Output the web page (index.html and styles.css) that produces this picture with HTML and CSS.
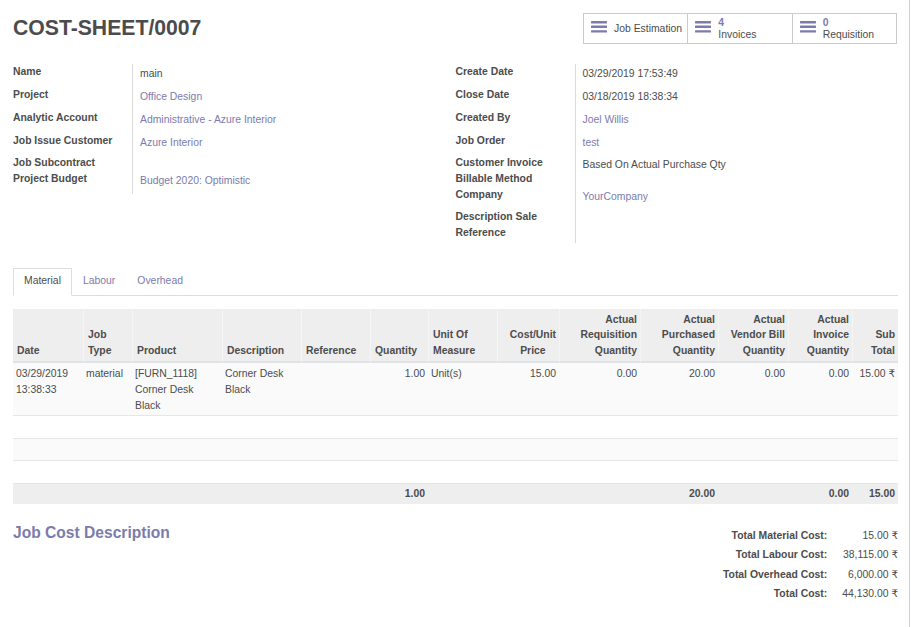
FILE: index.html
```html
<!DOCTYPE html>
<html lang="en">
<head>
<meta charset="utf-8">
<title>COST-SHEET/0007</title>
<link rel="stylesheet" href="styles.css">
</head>
<body>
<div class="page">
  <div class="header">
    <h1 class="title">COST-SHEET/0007</h1>
    <div class="statbox">
      <a class="stat">
        <svg class="bars" width="16" height="12" viewBox="0 0 16 12"><rect x="0" y="0" width="16" height="2.4" rx="0.6"/><rect x="0" y="4.6" width="16" height="2.4" rx="0.6"/><rect x="0" y="9.2" width="16" height="2.4" rx="0.6"/></svg>
        <span class="stat-text single">Job Estimation</span>
      </a>
      <a class="stat">
        <svg class="bars" width="16" height="12" viewBox="0 0 16 12"><rect x="0" y="0" width="16" height="2.4" rx="0.6"/><rect x="0" y="4.6" width="16" height="2.4" rx="0.6"/><rect x="0" y="9.2" width="16" height="2.4" rx="0.6"/></svg>
        <span class="stat-text"><span class="stat-value">4</span><span class="stat-label">Invoices</span></span>
      </a>
      <a class="stat">
        <svg class="bars" width="16" height="12" viewBox="0 0 16 12"><rect x="0" y="0" width="16" height="2.4" rx="0.6"/><rect x="0" y="4.6" width="16" height="2.4" rx="0.6"/><rect x="0" y="9.2" width="16" height="2.4" rx="0.6"/></svg>
        <span class="stat-text"><span class="stat-value">0</span><span class="stat-label">Requisition</span></span>
      </a>
    </div>
  </div>

  <div class="groups">
    <div class="group">
      <div class="lbl">Name</div><div class="val">main</div>
      <div class="lbl">Project</div><div class="val link">Office Design</div>
      <div class="lbl">Analytic Account</div><div class="val link">Administrative - Azure Interior</div>
      <div class="lbl r22">Job Issue Customer</div><div class="val link">Azure Interior</div>
      <div class="lbl r16">Job Subcontract</div><div class="val"></div>
      <div class="lbl">Project Budget</div><div class="val link">Budget 2020: Optimistic</div>
    </div>
    <div class="group">
      <div class="lbl">Create Date</div><div class="val">03/29/2019 17:53:49</div>
      <div class="lbl">Close Date</div><div class="val">03/18/2019 18:38:34</div>
      <div class="lbl">Created By</div><div class="val link">Joel Willis</div>
      <div class="lbl r22">Job Order</div><div class="val link">test</div>
      <div class="lbl">Customer Invoice Billable Method</div><div class="val">Based On Actual Purchase Qty</div>
      <div class="lbl r22">Company</div><div class="val link">YourCompany</div>
      <div class="lbl last">Description Sale Reference</div><div class="val"></div>
    </div>
  </div>

  <ul class="tabs">
    <li class="tab active">Material</li>
    <li class="tab">Labour</li>
    <li class="tab">Overhead</li>
  </ul>

  <table class="list">
    <thead>
      <tr>
        <th class="w-date">Date</th>
        <th class="w-type">Job<br>Type</th>
        <th class="w-prod">Product</th>
        <th class="w-desc">Description</th>
        <th class="w-ref">Reference</th>
        <th class="w-qty">Quantity</th>
        <th class="w-uom">Unit Of<br>Measure</th>
        <th class="w-cost num"><span class="stack">Cost/Unit<br>Price</span></th>
        <th class="w-req num">Actual<br>Requisition<br>Quantity</th>
        <th class="w-pur num">Actual<br>Purchased<br>Quantity</th>
        <th class="w-vb num">Actual<br>Vendor Bill<br>Quantity</th>
        <th class="w-inv num">Actual<br>Invoice<br>Quantity</th>
        <th class="w-sub num">Sub<br>Total</th>
      </tr>
    </thead>
    <tbody>
      <tr class="data">
        <td>03/29/2019 13:38:33</td>
        <td>material</td>
        <td>[FURN_1118] Corner Desk Black</td>
        <td>Corner Desk Black</td>
        <td></td>
        <td class="num">1.00</td>
        <td>Unit(s)</td>
        <td class="num">15.00</td>
        <td class="num">0.00</td>
        <td class="num">20.00</td>
        <td class="num">0.00</td>
        <td class="num">0.00</td>
        <td class="num nowrap">15.00 ₹</td>
      </tr>
      <tr class="empty"><td colspan="13">&nbsp;</td></tr>
      <tr class="empty"><td colspan="13">&nbsp;</td></tr>
      <tr class="empty"><td colspan="13">&nbsp;</td></tr>
    </tbody>
    <tfoot>
      <tr>
        <td></td><td></td><td></td><td></td><td></td>
        <td class="num">1.00</td>
        <td></td><td></td><td></td>
        <td class="num">20.00</td>
        <td></td>
        <td class="num">0.00</td>
        <td class="num">15.00</td>
      </tr>
    </tfoot>
  </table>

  <div class="bottom">
    <h3 class="section-title">Job Cost Description</h3>
    <div class="totals">
      <div class="t-lbl">Total Material Cost:</div><div class="t-val">15.00 ₹</div>
      <div class="t-lbl">Total Labour Cost:</div><div class="t-val">38,115.00 ₹</div>
      <div class="t-lbl">Total Overhead Cost:</div><div class="t-val">6,000.00 ₹</div>
      <div class="t-lbl">Total Cost:</div><div class="t-val">44,130.00 ₹</div>
    </div>
  </div>
</div>
</body>
</html>
```
FILE: styles.css
```css
* { box-sizing: border-box; }

html, body {
  margin: 0;
  padding: 0;
  background: #ffffff;
  overflow: hidden;
}

body {
  font-family: "Liberation Sans", Arial, "DejaVu Sans", sans-serif;
  font-size: 10.4px;
  line-height: 15.6px;
  color: #4c4c4c;
}

.page {
  width: 910px;
  min-height: 627px;
  border-right: 1px solid #cfcfcf;
  padding: 13px 11px 0 13px;
}

/* header */
.header {
  display: flex;
  justify-content: space-between;
  align-items: flex-start;
}

.title {
  margin: 0;
  padding-top: 2px;
  font-size: 21.2px;
  line-height: 26px;
  font-weight: bold;
  color: #4c4c4c;
}

.statbox {
  display: flex;
  width: 314px;
  height: 31px;
  border: 1px solid #cccccc;
  margin-right: 1px;
}

.stat {
  flex: 1;
  display: flex;
  align-items: center;
  gap: 7px;
  padding-left: 7px;
  color: #4c4c4c;
  text-decoration: none;
}

.stat + .stat {
  border-left: 1px solid #cccccc;
}

.bars {
  fill: #7c7bad;
  flex: none;
  margin-top: -4px;
}

.stat-text {
  display: flex;
  flex-direction: column;
  line-height: 12.5px;
  padding-top: 1px;
}

.stat-text.single {
  padding-top: 0;
  line-height: 15.6px;
}

.stat-value {
  color: #7c7bad;
  font-weight: bold;
}

/* form groups */
.groups {
  display: flex;
  margin-top: 20px;
}

.group {
  flex: 1;
  display: grid;
  grid-template-columns: 119px 1fr;
  align-content: start;
}

.lbl {
  font-weight: bold;
  line-height: 16px;
  min-height: 23px;
  padding-right: 4px;
}

.lbl.r22 { min-height: 22px; }
.lbl.r16 { min-height: 16px; }
.lbl.last { padding-bottom: 2px; }

.val {
  border-left: 1px solid #d9d9d9;
  padding-left: 7px;
  padding-top: 2px;
  line-height: 16px;
}

.link { color: #7c7bad; }

/* tabs */
.tabs {
  list-style: none;
  margin: 25px 0 0 0;
  padding: 0;
  display: flex;
  border-bottom: 1px solid #dddddd;
}

.tab {
  padding: 4px 10px 6px 10px;
  border: 1px solid transparent;
  color: #7c7bad;
  margin-bottom: -1px;
}

.tab.active {
  color: #4c4c4c;
  background: #ffffff;
  border-color: #dddddd #dddddd #ffffff #dddddd;
}

/* list table */
.list {
  margin-top: 13px;
  width: 885px;
  table-layout: fixed;
  border-collapse: separate;
  border-spacing: 0;
}

.list th {
  background: #eeeeee;
  font-weight: bold;
  text-align: left;
  vertical-align: bottom;
  padding: 3px 3px 3px 4px;
  border-bottom: 2px solid #dfe3e6;
  border-left: 1px solid #f5f5f5;
  white-space: nowrap;
}

.list th:first-child { border-left: none; }

.list th.num { text-align: right; }

.stack {
  display: inline-block;
  text-align: center;
}

.w-date { width: 70px; }
.w-type { width: 49px; }
.w-prod { width: 90px; }
.w-desc { width: 79px; }
.w-ref  { width: 69px; }
.w-qty  { width: 58px; }
.w-uom  { width: 69px; }
.w-cost { width: 62px; }
.w-req  { width: 81px; }
.w-pur  { width: 78px; }
.w-vb   { width: 70px; }
.w-inv  { width: 64px; }
.w-sub  { width: 46px; }

.list td {
  padding: 3px 3px 2px 3px;
  vertical-align: top;
  border-bottom: 1px solid #e6e6e6;
}

.list td.num { text-align: right; }
.list .nowrap { white-space: nowrap; }

.list tbody tr:nth-child(odd) { background: #fafafa; }
.list tbody tr.empty td { padding: 3px 4px; }

.list tfoot td {
  background: #eeeeee;
  font-weight: bold;
  padding: 2px 3px;
  border-bottom: none;
}

/* bottom */
.bottom {
  display: flex;
  justify-content: space-between;
  align-items: flex-start;
  margin-top: 20px;
}

.section-title {
  margin: 0;
  font-size: 15.6px;
  line-height: 18px;
  font-weight: bold;
  color: #7c7bad;
}

.totals {
  display: grid;
  grid-template-columns: auto auto;
  column-gap: 15px;
  margin-top: 2px;
}

.t-lbl {
  font-weight: bold;
  text-align: right;
  padding: 2px 0;
}

.t-val {
  text-align: right;
  padding: 2px 0;
  white-space: nowrap;
}
```
